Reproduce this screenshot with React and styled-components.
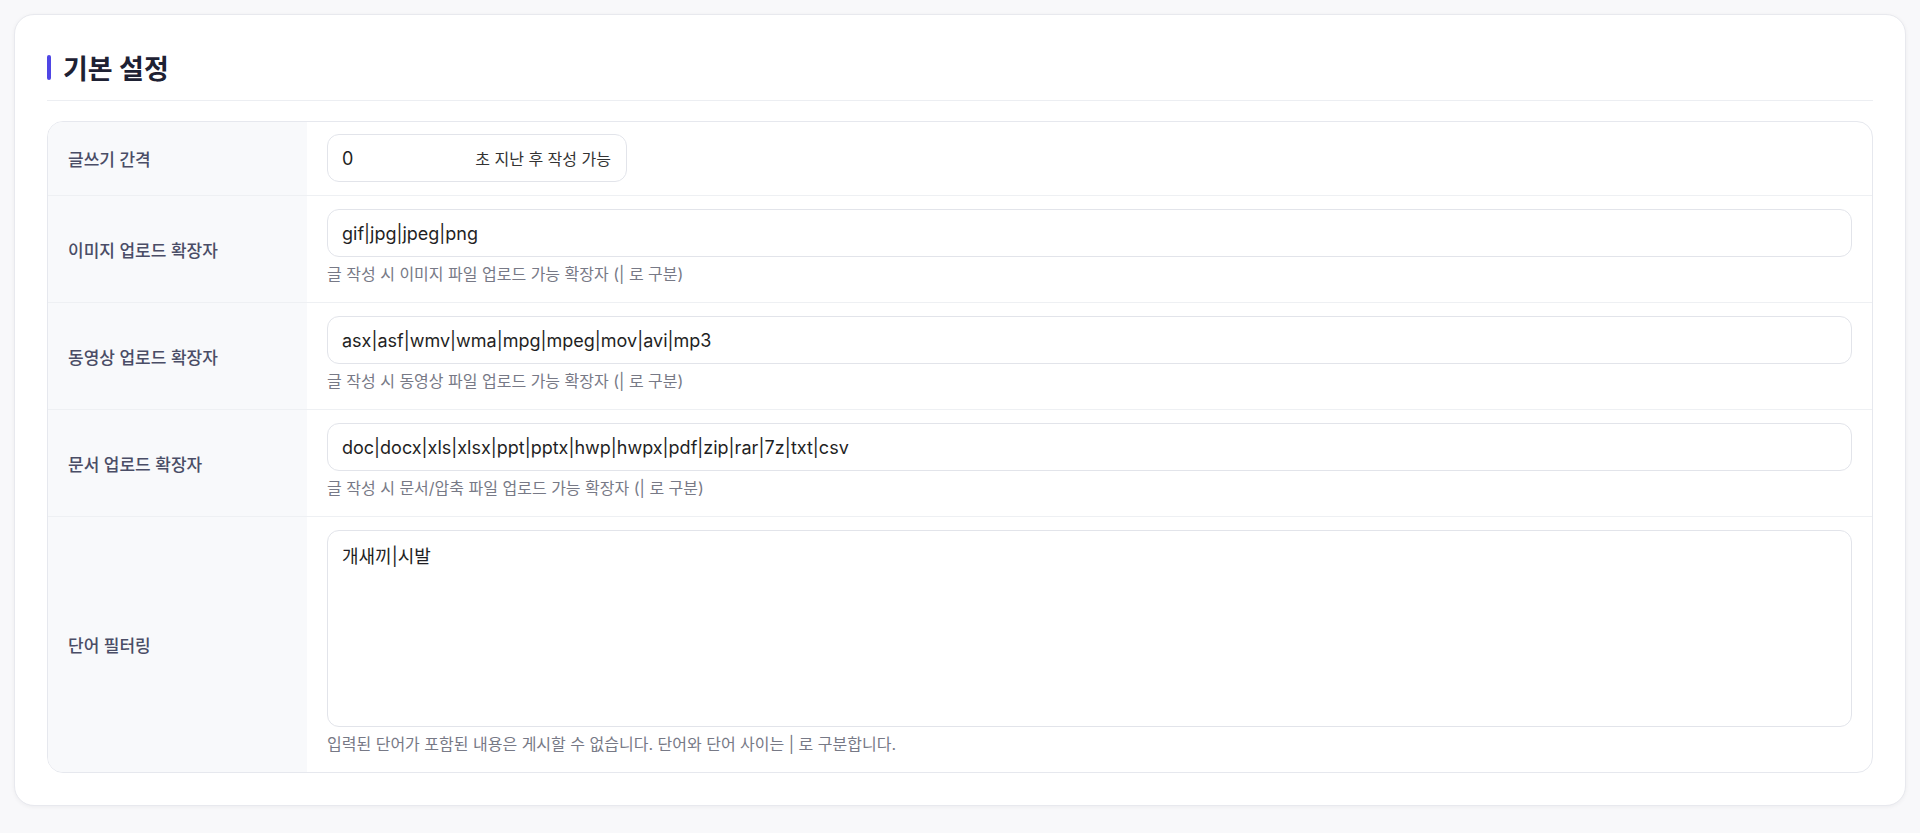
import React from 'react'
import styled, { createGlobalStyle } from 'styled-components'

const GlobalStyle = createGlobalStyle`
  * {
    box-sizing: border-box;
  }
  body {
    margin: 0;
    background: #f8f8fa;
    font-family: Inter, 'Noto Sans CJK KR', sans-serif;
    color: #222;
  }
`

const Page = styled.div`
  padding: 14px;
`

const Card = styled.section`
  background: #fff;
  border: 1px solid #e8e9ee;
  border-radius: 20px;
  padding: 32px;
  box-shadow: 0 1px 4px rgba(20, 20, 40, 0.05);
`

const SectionHeader = styled.div`
  display: flex;
  align-items: center;
  gap: 12px;
  height: 54px;
  padding-bottom: 12px;
  border-bottom: 1px solid #eceef2;
  margin-bottom: 20px;
`

const AccentBar = styled.span`
  width: 4px;
  height: 25px;
  border-radius: 2px;
  background: #4f46e5;
`

const Title = styled.h2`
  margin: 0;
  font-size: 27px;
  font-weight: 700;
  color: #1e2133;
`

const Table = styled.div`
  border: 1px solid #e6e8ee;
  border-radius: 16px;
  overflow: hidden;
`

const Row = styled.div`
  display: grid;
  grid-template-columns: 259px 1fr;
  border-bottom: 1px solid #eef0f3;

  &:last-child {
    border-bottom: none;
  }
`

const LabelCell = styled.div`
  display: flex;
  align-items: center;
  padding: 0 20px;
  background: #f8f9fb;
  font-size: 17px;
  font-weight: 500;
  color: #4a4d66;
`

const FieldCell = styled.div`
  padding: ${(props) => (props.$single ? '12px 20px 13px' : '13px 20px 17px')};
`

const TextInput = styled.input`
  display: block;
  width: 100%;
  height: 48px;
  padding: 0 14px;
  border: 1px solid #e2e4ea;
  border-radius: 12px;
  background: #fff;
  font-family: inherit;
  font-size: 18px;
  color: #1f1f24;
  outline: none;
`

const SuffixGroup = styled.label`
  display: flex;
  align-items: center;
  width: 300px;
  height: 48px;
  padding: 0 15px 0 14px;
  border: 1px solid #e2e4ea;
  border-radius: 12px;
  background: #fff;
`

const BareInput = styled.input`
  flex: 1;
  min-width: 0;
  border: none;
  padding: 0;
  font-family: inherit;
  font-size: 18px;
  color: #1f1f24;
  outline: none;
  background: transparent;
`

const Suffix = styled.span`
  font-size: 16px;
  color: #333;
  white-space: nowrap;
`

const TextArea = styled.textarea`
  display: block;
  width: 100%;
  height: 197px;
  padding: 12px 14px;
  border: 1px solid #e2e4ea;
  border-radius: 12px;
  font-family: inherit;
  font-size: 18px;
  line-height: 1.55;
  color: #1f1f24;
  resize: none;
  outline: none;
`

const Help = styled.p`
  margin: 6px 0 0;
  font-size: 16px;
  line-height: 22px;
  color: #777986;
`

const extensionFields = [
  {
    label: '이미지 업로드 확장자',
    value: 'gif|jpg|jpeg|png',
    help: '글 작성 시 이미지 파일 업로드 가능 확장자 (| 로 구분)',
  },
  {
    label: '동영상 업로드 확장자',
    value: 'asx|asf|wmv|wma|mpg|mpeg|mov|avi|mp3',
    help: '글 작성 시 동영상 파일 업로드 가능 확장자 (| 로 구분)',
  },
  {
    label: '문서 업로드 확장자',
    value: 'doc|docx|xls|xlsx|ppt|pptx|hwp|hwpx|pdf|zip|rar|7z|txt|csv',
    help: '글 작성 시 문서/압축 파일 업로드 가능 확장자 (| 로 구분)',
  },
]

export default function App() {
  return (
    <Page>
      <GlobalStyle />
      <Card>
        <SectionHeader>
          <AccentBar />
          <Title>기본 설정</Title>
        </SectionHeader>
        <Table>
          <Row>
            <LabelCell>글쓰기 간격</LabelCell>
            <FieldCell $single>
              <SuffixGroup>
                <BareInput defaultValue="0" />
                <Suffix>초 지난 후 작성 가능</Suffix>
              </SuffixGroup>
            </FieldCell>
          </Row>
          {extensionFields.map((f) => (
            <Row key={f.label}>
              <LabelCell>{f.label}</LabelCell>
              <FieldCell>
                <TextInput defaultValue={f.value} />
                <Help>{f.help}</Help>
              </FieldCell>
            </Row>
          ))}
          <Row>
            <LabelCell>단어 필터링</LabelCell>
            <FieldCell>
              <TextArea defaultValue="개새끼|시발" />
              <Help>입력된 단어가 포함된 내용은 게시할 수 없습니다. 단어와 단어 사이는 | 로 구분합니다.</Help>
            </FieldCell>
          </Row>
        </Table>
      </Card>
    </Page>
  )
}
